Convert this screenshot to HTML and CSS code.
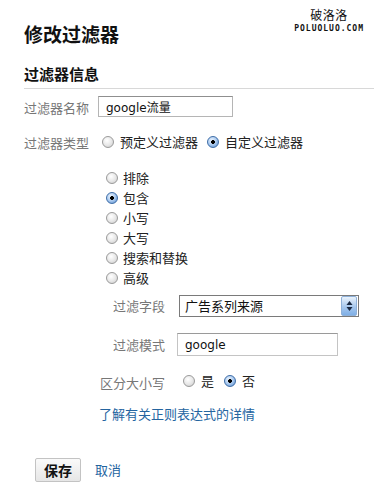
FILE: index.html
```html
<!DOCTYPE html>
<html lang="zh-CN">
<head>
    <meta charset="UTF-8">
    <meta name="viewport" content="width=device-width, initial-scale=1.0">
    <title>修改过滤器</title>
    <link rel="stylesheet" href="styles.css">
</head>
<body>
    <div class="page">
        <div class="watermark">
            <span class="wm-cn">破洛洛</span>
            <span class="wm-en">POLUOLUO.COM</span>
        </div>

        <h1 class="title">修改过滤器</h1>
        <h2 class="section-title">过滤器信息</h2>

        <div class="field field-name">
            <label class="field-label" for="filterName">过滤器名称</label>
            <input class="text-input name-input" type="text" id="filterName" value="google流量">
        </div>

        <div class="field field-type">
            <span class="field-label">过滤器类型</span>
            <div class="radio-group">
                <label class="radio"><input type="radio" name="filterType"> 预定义过滤器</label>
                <label class="radio"><input type="radio" name="filterType" checked> 自定义过滤器</label>
            </div>
        </div>

        <div class="custom">
            <div class="radio-list">
                <label class="radio"><input type="radio" name="customType"> 排除</label>
                <label class="radio"><input type="radio" name="customType" checked> 包含</label>
                <label class="radio"><input type="radio" name="customType"> 小写</label>
                <label class="radio"><input type="radio" name="customType"> 大写</label>
                <label class="radio"><input type="radio" name="customType"> 搜索和替换</label>
                <label class="radio"><input type="radio" name="customType"> 高级</label>
            </div>

            <div class="sub-field sub-select">
                <span class="sub-label">过滤字段</span>
                <div class="select">
                    <span class="select-value">广告系列来源</span>
                    <span class="spin">
                        <svg width="7" height="12" viewBox="0 0 7 12">
                            <path d="M3.5 1 L6.5 5 L0.5 5 Z" fill="#1b2a44"/>
                            <path d="M3.5 11 L6.5 7 L0.5 7 Z" fill="#1b2a44"/>
                        </svg>
                    </span>
                </div>
            </div>

            <div class="sub-field sub-pattern">
                <label class="sub-label" for="pattern">过滤模式</label>
                <input class="text-input pattern-input" type="text" id="pattern" value="google">
            </div>

            <div class="sub-field sub-case">
                <span class="sub-label">区分大小写</span>
                <div class="radio-group case-group">
                    <label class="radio"><input type="radio" name="caseSensitive"> 是</label>
                    <label class="radio"><input type="radio" name="caseSensitive" checked> 否</label>
                </div>
            </div>

            <a class="help-link" href="#">了解有关正则表达式的详情</a>
        </div>

        <div class="actions">
            <button class="save-btn">保存</button>
            <a class="cancel-link" href="#">取消</a>
        </div>
    </div>
</body>
</html>
```

FILE: styles.css
```css
body {
    margin: 0;
    background-color: #ffffff;
    font-family: "Noto Sans CJK SC", "DejaVu Sans", sans-serif;
    font-size: 13px;
    color: #222;
}
.page {
    position: relative;
    padding-left: 24px;
    height: 503px;
    box-sizing: border-box;
    overflow: hidden;
}
.watermark {
    position: absolute;
    top: 7px;
    right: 10px;
    display: flex;
    flex-direction: column;
    align-items: center;
    color: #111;
}
.wm-cn {
    font-size: 12px;
    line-height: 15px;
    letter-spacing: 0.5px;
}
.wm-en {
    font-family: "DejaVu Sans Mono", monospace;
    font-size: 8px;
    font-weight: bold;
    line-height: 9px;
    letter-spacing: 1px;
    margin-top: 2px;
}
.title {
    margin: 22px 0 0;
    font-size: 19px;
    line-height: 24px;
    font-weight: bold;
    color: #111;
}
.section-title {
    margin: 18px 0 0;
    padding-bottom: 4px;
    font-size: 15px;
    line-height: 20px;
    font-weight: bold;
    color: #111;
    border-bottom: 1px solid #d8d8d8;
}
.field {
    display: flex;
    align-items: flex-start;
}
.field-label {
    color: #777;
    line-height: 16px;
}
.field-name {
    margin-top: 7px;
}
.field-name .field-label {
    width: 74px;
    padding-top: 4px;
}
.field-type {
    margin-top: 16px;
}
.field-type .field-label {
    width: 78px;
    padding-top: 2px;
}
.text-input {
    box-sizing: border-box;
    height: 21px;
    margin: 0;
    padding: 0 7px;
    border: 1px solid #b5b5b5;
    border-top-color: #8f8f8f;
    font-family: "DejaVu Sans", "Noto Sans CJK SC", sans-serif;
    font-size: 12px;
    color: #111;
    background-color: #fff;
}
.name-input {
    width: 135px;
}
.radio-group {
    display: flex;
    gap: 9px;
}
.radio {
    display: flex;
    align-items: center;
    gap: 6px;
    line-height: 18px;
    color: #222;
}
.radio input {
    appearance: none;
    -webkit-appearance: none;
    box-sizing: border-box;
    width: 12px;
    height: 12px;
    margin: 0;
    border-radius: 50%;
    border: 1px solid #9a9a9a;
    background: radial-gradient(circle at 40% 35%, #ffffff 0, #e6e6e6 55%, #c8c8c8 100%);
}
.radio input:checked {
    border-color: #3f6ea8;
    background:
        radial-gradient(circle, #000 0, #000 1.6px, transparent 2.2px),
        radial-gradient(circle at 40% 35%, #f2f8ff 0, #a9c9ef 50%, #4f86c8 100%);
}
.radio-list {
    display: flex;
    flex-direction: column;
    margin: 17px 0 0 82px;
}
.radio-list .radio {
    line-height: 20px;
    gap: 5px;
}
.sub-field {
    display: flex;
    align-items: center;
    margin-left: 76px;
}
.sub-label {
    width: 65px;
    text-align: right;
    color: #777;
    line-height: 16px;
}
.sub-select {
    margin-top: 7px;
}
.select {
    display: flex;
    align-items: center;
    justify-content: space-between;
    box-sizing: border-box;
    width: 180px;
    height: 22px;
    margin-left: 14px;
    padding-left: 5px;
    border: 1px solid #7a7a7a;
    background-color: #fff;
    color: #111;
}
.select-value {
    line-height: 16px;
}
.spin {
    display: flex;
    align-items: center;
    justify-content: center;
    width: 14px;
    height: 18px;
    margin-right: 1px;
    border: 1px solid #8fb1d9;
    border-radius: 2px;
    background: linear-gradient(#eaf3fd, #a7c8ee 55%, #7fafe6);
}
.sub-pattern {
    margin-top: 16px;
}
.pattern-input {
    width: 161px;
    height: 23px;
    margin-left: 12px;
    border-color: #c4c4c4;
    border-top-color: #9a9a9a;
}
.sub-case {
    margin-top: 16px;
    align-items: flex-start;
}
.sub-case .sub-label {
    padding-top: 3px;
}
.case-group {
    margin-left: 18px;
    gap: 10px;
}
.help-link {
    display: block;
    margin: 14px 0 0 75px;
    line-height: 18px;
    color: #24649f;
    text-decoration: none;
}
.actions {
    display: flex;
    align-items: center;
    gap: 14px;
    margin: 35px 0 0 11px;
}
.save-btn {
    box-sizing: border-box;
    width: 46px;
    height: 24px;
    padding: 0;
    border: 1px solid #c3c3c3;
    border-radius: 2px;
    background: linear-gradient(#fafafa, #e6e6e6);
    font-family: "Noto Sans CJK SC", sans-serif;
    font-size: 14px;
    font-weight: bold;
    color: #111;
}
.cancel-link {
    color: #24649f;
    text-decoration: none;
    line-height: 18px;
}
```
